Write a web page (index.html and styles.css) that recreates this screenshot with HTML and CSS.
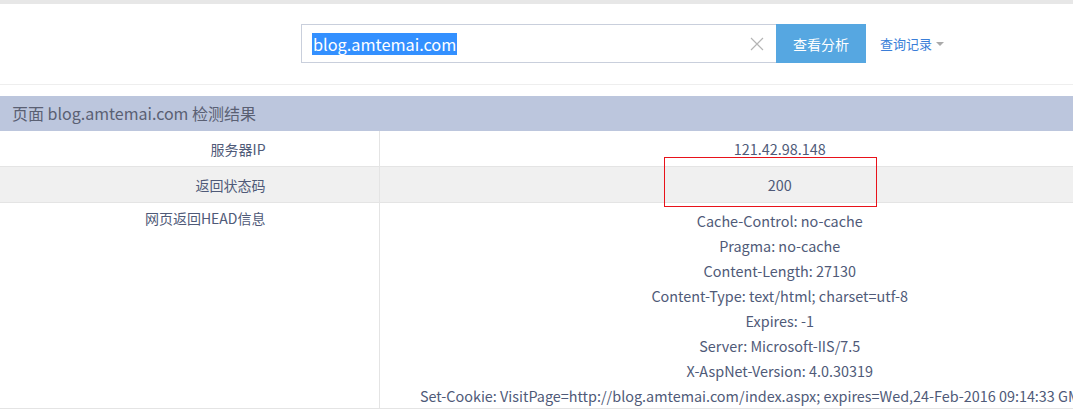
FILE: index.html
```html
<!DOCTYPE html>
<html lang="zh-CN">
<head>
<meta charset="utf-8">
<title>检测结果</title>
<link rel="stylesheet" href="styles.css">
</head>
<body>
<div class="topbar"></div>
<div class="search">
  <div class="input">
    <span class="sel">blog.amtemai.com</span>
    <svg class="clear" width="14" height="14" viewBox="0 0 14 14"><path d="M1 1L13 13M13 1L1 13" stroke="#b5b5b5" stroke-width="1.2" fill="none"/></svg>
  </div>
  <button class="btn">查看分析</button>
  <a class="history">查询记录<span class="caret"></span></a>
</div>
<div class="sep"></div>
<div class="result">
  <div class="title">页面 blog.amtemai.com 检测结果</div>
  <table class="tbl">
    <colgroup><col class="c1"><col class="c2"></colgroup>
    <tr class="r">
      <td class="k">服务器IP</td>
      <td class="v">121.42.98.148</td>
    </tr>
    <tr class="r alt">
      <td class="k">返回状态码</td>
      <td class="v">200</td>
    </tr>
    <tr class="r head">
      <td class="k">网页返回HEAD信息</td>
      <td class="v lines">
        <div>Cache-Control: no-cache</div>
        <div>Pragma: no-cache</div>
        <div>Content-Length: 27130</div>
        <div>Content-Type: text/html; charset=utf-8</div>
        <div>Expires: -1</div>
        <div>Server: Microsoft-IIS/7.5</div>
        <div>X-AspNet-Version: 4.0.30319</div>
        <div>Set-Cookie: VisitPage=http://blog.amtemai.com/index.aspx; expires=Wed,24-Feb-2016 09:14:33 GMT; path=/</div>
      </td>
    </tr>
  </table>
  <div class="mark"></div>
</div>
</body>
</html>
```
FILE: styles.css
```css
html, body {
  margin: 0;
  padding: 0;
  background: #fff;
  overflow: hidden;
}
body {
  width: 1073px;
  height: 411px;
  font-family: "Noto Sans CJK SC", "Noto Sans", sans-serif;
  font-size: 14px;
  color: #4f5a78;
}
.topbar {
  height: 4px;
  background: #e7e7e7;
}
.search {
  display: flex;
  align-items: center;
  margin-top: 20px;
  padding-left: 301px;
  height: 39px;
}
.input {
  box-sizing: border-box;
  width: 475px;
  height: 39px;
  border: 1px solid #c9cfdc;
  border-right: none;
  display: flex;
  align-items: center;
  padding-left: 10px;
  padding-right: 12px;
}
.sel {
  background: #3390ff;
  color: #fff;
  font-size: 16.3px;
  line-height: 22px;
  font-family: "Noto Sans CJK SC", "Noto Sans", sans-serif;
  padding: 0 1px;
}
.clear {
  margin-left: auto;
}
.btn {
  width: 90px;
  height: 39px;
  border: none;
  background: #56a7e1;
  color: #fff;
  font-family: "Noto Sans CJK SC", sans-serif;
  font-size: 14px;
  padding: 0;
}
.history {
  margin-left: 14px;
  color: #3a7ed8;
  font-size: 13px;
  display: flex;
  align-items: center;
}
.caret {
  margin-left: 4px;
  width: 0;
  height: 0;
  border-left: 4px solid transparent;
  border-right: 4px solid transparent;
  border-top: 4px solid #aaa;
}
.sep {
  margin-top: 21px;
  height: 1px;
  background: #eeeeee;
}
.result {
  position: relative;
  margin-top: 11px;
}
.title {
  height: 35px;
  line-height: 35px;
  background: #bcc6dd;
  color: #5a6073;
  font-size: 16px;
  padding-left: 12px;
}
.tbl {
  width: 1180px;
  table-layout: fixed;
  border-collapse: collapse;
}
.c1 { width: 379px; }
.tbl td {
  padding: 0;
  border-bottom: 1px solid #e4e4e4;
  vertical-align: middle;
}
.r td { height: 35px; }
.alt td { background: #f0f0f0; }
.k {
  text-align: right;
  padding-right: 113px !important;
  border-right: 1px solid #e4e4e4;
}
.v {
  text-align: center;
  white-space: nowrap;
  font-size: 14.4px;
}
.head td {
  vertical-align: top;
  padding-top: 5px !important;
}
.lines div {
  line-height: 25px;
}
.mark {
  position: absolute;
  left: 664px;
  top: 61px;
  width: 211px;
  height: 48px;
  border: 1px solid #e8121a;
}
```
